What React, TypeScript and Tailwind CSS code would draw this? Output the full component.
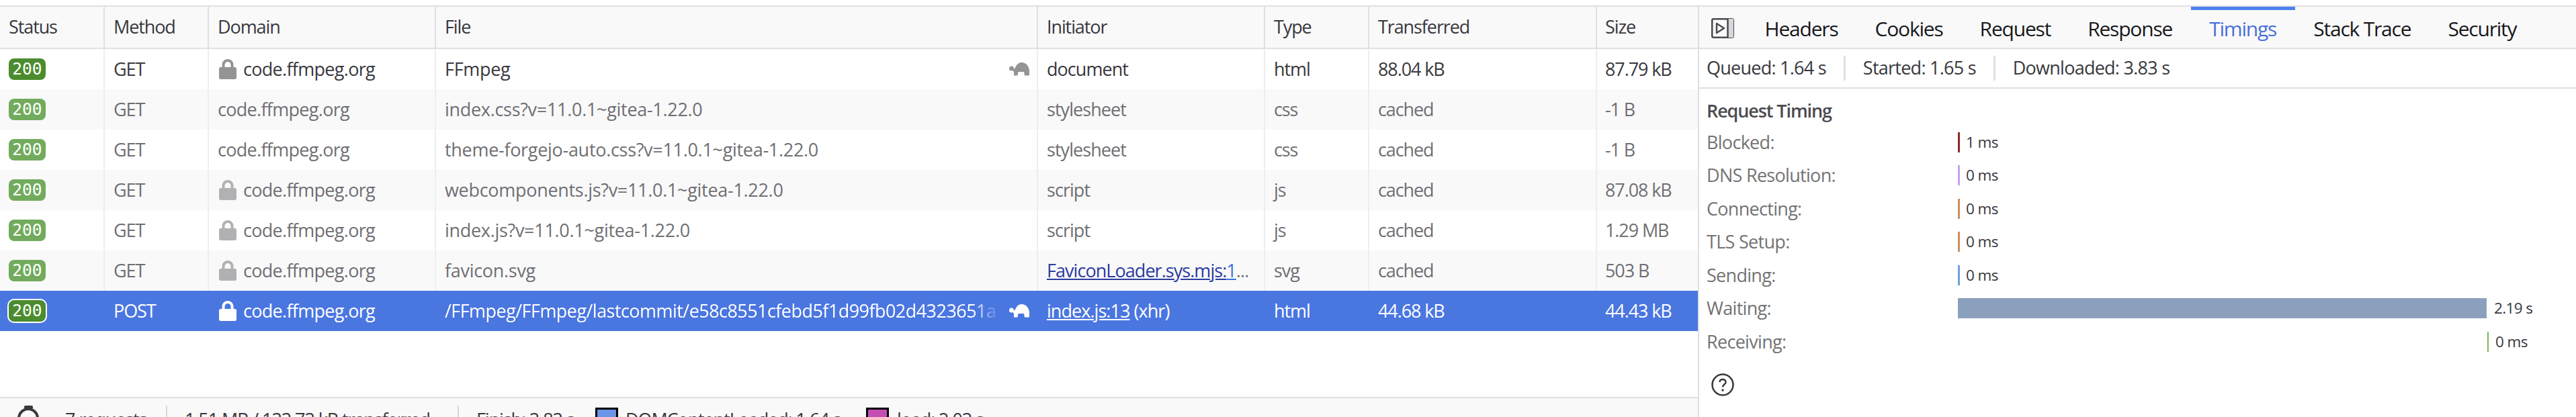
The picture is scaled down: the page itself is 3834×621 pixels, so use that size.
const rows = [
  { method: "GET", lock: true, file: "FFmpeg", slow: true, init: "document", type: "html", sent: "88.04 kB", size: "87.79 kB" },
  { method: "GET", lock: false, file: "index.css?v=11.0.1~gitea-1.22.0", init: "stylesheet", type: "css", sent: "cached", size: "-1 B" },
  { method: "GET", lock: false, file: "theme-forgejo-auto.css?v=11.0.1~gitea-1.22.0", init: "stylesheet", type: "css", sent: "cached", size: "-1 B" },
  { method: "GET", lock: true, file: "webcomponents.js?v=11.0.1~gitea-1.22.0", init: "script", type: "js", sent: "cached", size: "87.08 kB" },
  { method: "GET", lock: true, file: "index.js?v=11.0.1~gitea-1.22.0", init: "script", type: "js", sent: "cached", size: "1.29 MB" },
  { method: "GET", lock: true, file: "favicon.svg", init: "favicon", type: "svg", sent: "cached", size: "503 B" },
  { method: "POST", lock: true, file: "/FFmpeg/FFmpeg/lastcommit/e58c8551cfebd5f1d99fb02d4323651a", slow: true, init: "xhr", type: "html", sent: "44.68 kB", size: "44.43 kB", selected: true },
];

const tabs = ["Headers", "Cookies", "Request", "Response", "Timings", "Stack Trace", "Security"];

const timings = [
  { label: "Blocked:", value: "1 ms", bar: "bg-[#8f2a2a]" },
  { label: "DNS Resolution:", value: "0 ms", bar: "bg-[#c9a0ef]" },
  { label: "Connecting:", value: "0 ms", bar: "bg-[#ce8e5e]" },
  { label: "TLS Setup:", value: "0 ms", bar: "bg-[#ce8e5e]" },
  { label: "Sending:", value: "0 ms", bar: "bg-[#6da3d8]" },
];

const LockIcon = () => (
  <svg width="26" height="30" viewBox="0 0 26 30" className="shrink-0 fill-current">
    <path
      fillRule="evenodd"
      d="M13 0c-5 0-8.500 3.700-8.500 8.500V12H2.500C1 12 0 13 0 14.500V27.500C0 29 1 30 2.500 30h21c1.500 0 2.500-1 2.500-2.500V14.500C26 13 25 12 23.500 12H21.500V8.500C21.500 3.700 18 0 13 0zM8.500 12V8.500C8.500 6 10.500 4 13 4s4.500 2 4.500 4.500V12z"
    />
  </svg>
);

const TurtleIcon = () => (
  <svg width="30" height="20" viewBox="0 0 30 20" className="shrink-0 fill-current">
    <circle cx="3.500" cy="9" r="3.500" />
    <path d="M5 11.500L9 8C11 3 14 0 18.500 0C25 0 30 6 30 13V19.500H23L22 14H13.500L12.500 19.500H7V14z" />
  </svg>
);

const Cell = ({ className = "", line, children }: { className?: string; line?: string; children: React.ReactNode }) => (
  <div className={`flex h-full items-center pl-[13px] border-r-2 ${line ?? "border-transparent"} ${className}`}>{children}</div>
);

const Row = ({ row, index }: { row: (typeof rows)[number]; index: number }) => {
  const first = index === 0;
  const line = row.selected ? "border-transparent" : "border-[#eeeeef]";
  const bg = row.selected ? "bg-[#4a76e0] text-white" : index % 2 === 1 ? "bg-[#f9f9fa]" : "bg-white";
  const text = row.selected ? "" : first ? "text-[#38383d]" : "text-[#6f6f73]";
  const icon = row.selected ? "text-white" : first ? "text-[#949494]" : "text-[#b1b1b3]";

  return (
    <div className={`flex h-[60px] ${bg} ${text}`}>
      <Cell line={line} className="w-[156px] pl-[12px]">
        <span
          className={`flex h-[32px] w-[55px] items-center justify-center rounded-[8px] font-['DejaVu_Sans_Mono',monospace] text-[24.5px] tracking-normal text-white ${
            first || row.selected ? "bg-[#4b8c2e]" : "bg-[#72ab5d]"
          } ${row.selected ? "outline-2 outline-white" : ""}`}
        >
          200
        </span>
      </Cell>
      <Cell line={line} className="w-[155px] pl-[12px]">{row.method}</Cell>
      <Cell line={line} className="w-[338px] pl-[10px] tracking-[-0.7px]">
        {row.lock && (
          <span className={`ml-[2px] mr-[10px] ${icon}`}>
            <LockIcon />
          </span>
        )}
        code.ffmpeg.org
      </Cell>
      <Cell line={line} className={`w-[896px] pr-[11px] ${row.selected ? "tracking-[-0.55px]" : "tracking-[-0.3px]"}`}>
        <span
          className={`min-w-0 flex-1 overflow-hidden whitespace-nowrap ${
            row.selected ? "[mask-image:linear-gradient(to_right,black_95%,transparent)]" : ""
          }`}
        >
          {row.file}
        </span>
        {row.slow && (
          <span className={`ml-[14px] ${icon}`}>
            <TurtleIcon />
          </span>
        )}
      </Cell>
      <Cell line={line} className="w-[338px] tracking-[-0.95px]">
        {row.init === "favicon" ? (
          <span className="whitespace-nowrap">
            <span className="text-[#2b3b9f] underline">FaviconLoader.sys.mjs:</span>
            <span className="text-[#3b6fe0] underline">1</span>...
          </span>
        ) : row.init === "xhr" ? (
          <span className="whitespace-nowrap">
            <span className="underline">index.js:13</span> (xhr)
          </span>
        ) : (
          row.init
        )}
      </Cell>
      <Cell line={line} className="w-[155px]">{row.type}</Cell>
      <Cell line={line} className="w-[339px]">{row.sent}</Cell>
      <div className="flex h-full w-[150px] items-center pl-[12px]">{row.size}</div>
    </div>
  );
};

const TimingRow = ({ label, children }: { label: string; children: React.ReactNode }) => (
  <div className="flex h-[49.500px] items-center">
    <span className="w-[374px] tracking-[-0.7px] text-[#737373]">{label}</span>
    {children}
  </div>
);

export default function App() {
  return (
    <div className="flex h-[621px] w-[3834px] flex-col overflow-hidden bg-white pt-[8px] font-['Open_Sans',sans-serif] text-[27px] tracking-[-1.1px] text-[#38383d]">
      <div className="h-[2px] shrink-0 bg-[#e0e0e2]" />
      <div className="flex min-h-0 flex-1">
        {/* request list */}
        <div className="flex w-[2527px] shrink-0 flex-col">
          <div className="flex h-[63px] shrink-0 border-b-2 border-[#e0e0e2] bg-[#f9f9fa]">
            <Cell line="border-[#e0e0e2]" className="w-[156px] pl-[11px]">Status</Cell>
            <Cell line="border-[#e0e0e2]" className="w-[155px] pl-[12px]">Method</Cell>
            <Cell line="border-[#e0e0e2]" className="w-[338px]">Domain</Cell>
            <Cell line="border-[#e0e0e2]" className="w-[896px]">File</Cell>
            <Cell line="border-[#e0e0e2]" className="w-[338px]">Initiator</Cell>
            <Cell line="border-[#e0e0e2]" className="w-[155px]">Type</Cell>
            <Cell line="border-[#e0e0e2]" className="w-[339px]">Transferred</Cell>
            <div className="flex h-full w-[150px] items-center pl-[12px]">Size</div>
          </div>
          {rows.map((row, i) => (
            <Row key={i} row={row} index={i} />
          ))}
          <div className="flex-1" />
          {/* status bar, cut off by the window */}
          <div className="flex h-[30px] shrink-0 items-start overflow-hidden border-t-2 border-[#e0e0e2] bg-[#f9f9fa] pt-[11px] leading-[36px]">
            <svg width="34" height="36" viewBox="0 0 34 36" className="ml-[25px] shrink-0 text-[#38383d]">
              <rect x="11" y="0" width="13" height="5" rx="2" fill="currentColor" />
              <circle cx="17" cy="19" r="14" fill="none" stroke="currentColor" strokeWidth="4" />
            </svg>
            <span className="ml-[38px] mt-[3px] w-[150px] whitespace-nowrap">7 requests</span>
            <span className="h-[40px] w-[2px] bg-[#d7d7db]" />
            <span className="ml-[26px] mt-[3px] w-[406px] whitespace-nowrap">1.51 MB / 133.73 kB transferred</span>
            <span className="h-[40px] w-[2px] bg-[#d7d7db]" />
            <span className="ml-[26px] mt-[3px] w-[177px] whitespace-nowrap">Finish: 3.83 s</span>
            <span className="mt-[3px] h-[36px] w-[34px] shrink-0 border-[3px] border-black bg-[#6a95e6]" />
            <span className="ml-[11px] mt-[3px] w-[358px] whitespace-nowrap">DOMContentLoaded: 1.64 s</span>
            <span className="mt-[3px] h-[36px] w-[34px] shrink-0 border-[3px] border-black bg-[#c34fb4]" />
            <span className="ml-[12px] mt-[3px] whitespace-nowrap">load: 2.03 s</span>
          </div>
        </div>

        {/* details panel */}
        <div className="flex min-w-0 flex-1 flex-col border-l-2 border-[#e0e0e2]">
          <div className="flex h-[63px] shrink-0 items-stretch border-b-2 border-[#e0e0e2] bg-[#f9f9fa] pl-[18px] text-[30px] tracking-[-1.2px] text-[#18181a]">
            <svg width="34" height="30" viewBox="0 0 34 30" className="mt-[17px] shrink-0 text-[#4a4a4f]">
              <rect x="1.250" y="1.250" width="31.500" height="27.500" rx="2" fill="none" stroke="currentColor" strokeWidth="2.500" />
              <rect x="24" y="1" width="9" height="28" fill="#d7d7db" />
              <path d="M24.500 1V29" stroke="currentColor" strokeWidth="2.500" />
              <path d="M8 8L19 15L8 22Z" fill="none" stroke="currentColor" strokeWidth="2.500" strokeLinejoin="round" />
            </svg>
            <div className="ml-[18px] flex">
              {tabs.map((tab) => (
                <div
                  key={tab}
                  className={`flex items-center border-t-[5px] px-[27.500px] pb-[2px] ${
                    tab === "Timings" ? "border-[#4d82f0] text-[#4a6fdc]" : "border-transparent"
                  }`}
                >
                  {tab}
                </div>
              ))}
            </div>
          </div>

          <div className="flex h-[59px] shrink-0 items-center border-b-2 border-[#e0e0e2] pl-[11px] tracking-[-0.75px]">
            <span className="whitespace-nowrap">Queued: 1.64 s</span>
            <span className="mx-[26px] h-[37px] w-[3px] bg-[#e0e0e2]" />
            <span className="whitespace-nowrap">Started: 1.65 s</span>
            <span className="mx-[26px] h-[37px] w-[3px] bg-[#e0e0e2]" />
            <span className="whitespace-nowrap">Downloaded: 3.83 s</span>
          </div>

          <div className="flex flex-col pl-[11px]">
            <h2 className="flex h-[55px] items-center pt-[11px] text-[27px] font-semibold text-[#4a4a4f]">Request Timing</h2>
            {timings.map((t) => (
              <TimingRow key={t.label} label={t.label}>
                <span className={`h-[30px] w-[3px] ${t.bar}`} />
                <span className="ml-[9px] text-[22.500px] tracking-[-0.6px] text-[#38383d]">{t.value}</span>
              </TimingRow>
            ))}
            <TimingRow label="Waiting:">
              <span className="h-[30px] w-[787px] bg-[#8ba0bd]" />
              <span className="ml-[11px] text-[22.500px] tracking-[-0.6px] text-[#38383d]">2.19 s</span>
            </TimingRow>
            <TimingRow label="Receiving:">
              <span className="ml-[788px] h-[30px] w-[2px] bg-[#7db854]" />
              <span className="ml-[10px] text-[22.500px] tracking-[-0.6px] text-[#38383d]">0 ms</span>
            </TimingRow>
            <svg width="34" height="34" viewBox="0 0 34 34" className="ml-[7px] mt-[22px] text-[#38383d]">
              <circle cx="17" cy="17" r="15.500" fill="none" stroke="currentColor" strokeWidth="2.500" />
              <path d="M12.500 13C12.500 10.500 14.500 9 17 9C19.500 9 21.500 10.500 21.500 13C21.500 16.500 17 16.500 17 20.500" fill="none" stroke="currentColor" strokeWidth="2.500" />
              <circle cx="17" cy="25" r="1.800" fill="currentColor" />
            </svg>
          </div>
        </div>
      </div>
    </div>
  );
}
